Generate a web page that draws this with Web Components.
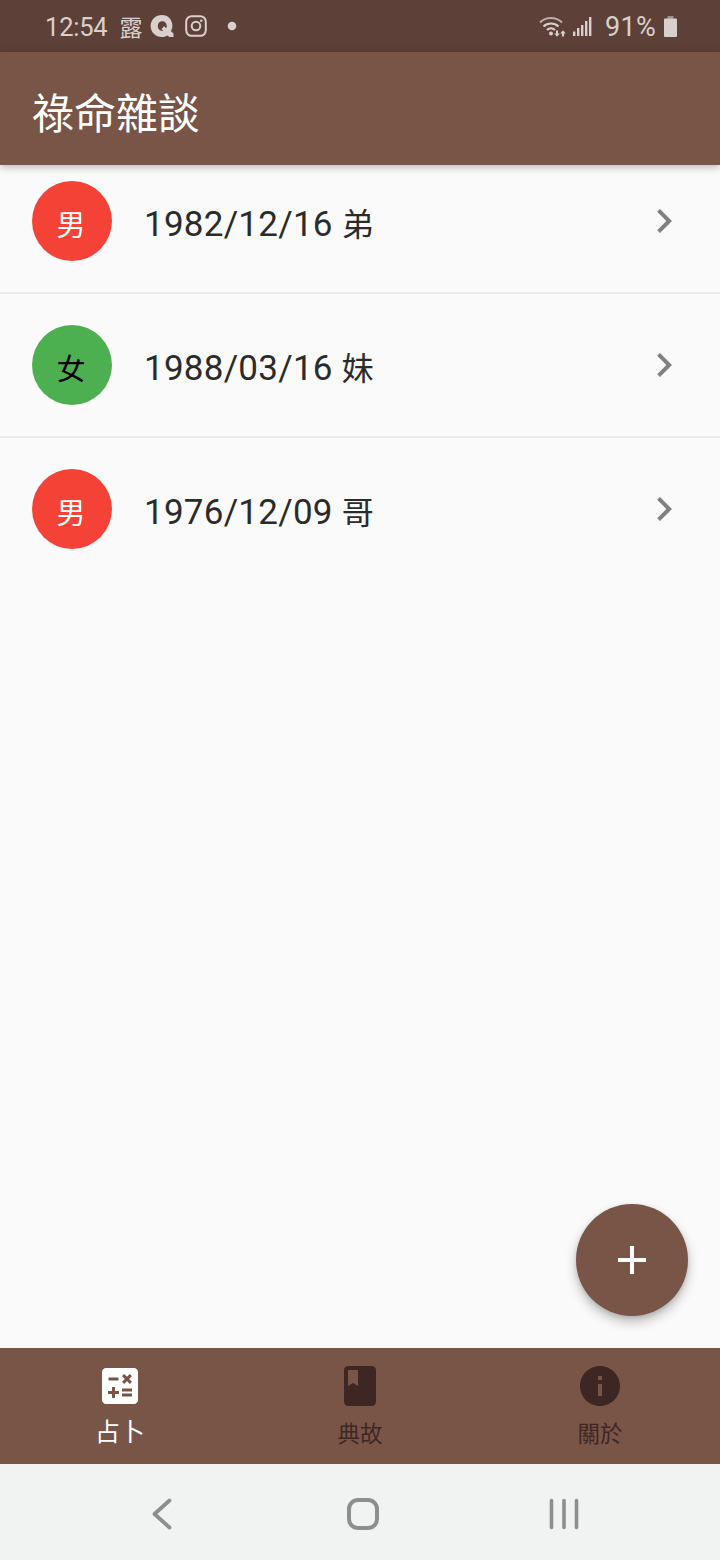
<!DOCTYPE html>
<html lang="zh-Hant">
<head>
<meta charset="utf-8">
<title>祿命雜談</title>
<style>
  html, body { margin: 0; padding: 0; background: #fafafa; }
  body { font-family: Roboto, "Noto Sans CJK TC", sans-serif; }
</style>
</head>
<body>
<app-shell>
  <status-bar slot="top"></status-bar>
  <app-bar slot="top">祿命雜談</app-bar>
  <person-list>
    <person-row sex="男">1982/12/16 <small>弟</small></person-row>
    <person-row sex="女">1988/03/16 <small>妹</small></person-row>
    <person-row sex="男">1976/12/09 <small>哥</small></person-row>
  </person-list>
  <add-fab slot="fab"></add-fab>
  <bottom-nav slot="bottom">
    <nav-item icon="calc" active>占卜</nav-item>
    <nav-item icon="book">典故</nav-item>
    <nav-item icon="info">關於</nav-item>
  </bottom-nav>
  <system-nav slot="bottom"></system-nav>
</app-shell>

<script>
const CJK = '"Noto Sans CJK TC", sans-serif';

class AppShell extends HTMLElement {
  constructor() {
    super();
    this.attachShadow({ mode: 'open' });
    this.shadowRoot.innerHTML = `
      <style>
        :host { display: flex; flex-direction: column; width: 720px; height: 1560px; overflow: hidden; background: #fafafa; }
        .top { position: relative; z-index: 2; }
        .content { position: relative; flex: 1; min-height: 0; }
        .scroll { height: 100%; overflow: hidden; }
        .fab { position: absolute; right: 32px; bottom: 32px; }
      </style>
      <div class="top"><slot name="top"></slot></div>
      <div class="content">
        <div class="scroll"><slot></slot></div>
        <div class="fab"><slot name="fab"></slot></div>
      </div>
      <div><slot name="bottom"></slot></div>
    `;
  }
}

class StatusBar extends HTMLElement {
  constructor() {
    super();
    this.attachShadow({ mode: 'open' });
    this.shadowRoot.innerHTML = `
      <style>
        :host { display: flex; align-items: center; justify-content: space-between; height: 52px; padding: 0 43px 0 45px; background: #5d4037; color: #d9d0cd; }
        .side { display: flex; align-items: center; }
        .time { padding-top: 3px; font: 400 25.500px/1 Roboto, sans-serif; letter-spacing: -0.2px; }
        .han { font: 400 23px/1 ${CJK}; margin-left: 12px; }
        svg { display: block; fill: currentColor; }
        .pct { padding-top: 3px; font: 400 27px/1 Roboto, sans-serif; margin: 0 8px 0 13px; letter-spacing: .3px; }
      </style>
      <div class="side">
        <span class="time">12:54</span>
        <span class="han">露</span>
        <svg style="margin-left:7px" width="24" height="24" viewBox="0 0 24 24"><path fill-rule="evenodd" d="M12 1C5.600 1 .6 5.800 .6 12s5 11 11.400 11c2.500 0 4.300-.7 5.600-1.500l1.600 1.600h4.300v-3.600l-2.600-2.400c.9-1.600 1.500-3.300 1.500-5.100C22.400 5.800 18.300 1 12 1zm.2 6.300c2.700 0 4.500 2 4.500 4.700 0 .8-.2 1.600-.5 2.200l-2.100-2-2.600 2.800 1.800 1.800c-.3.100-.6.100-.9.100-2.700 0-4.600-2.100-4.600-4.900s1.900-4.700 4.400-4.700z"/></svg>
        <svg style="margin-left:11px" width="22" height="22" viewBox="0 0 22 22"><rect x="1.200" y="1.200" width="19.600" height="19.600" rx="5.500" fill="none" stroke="currentColor" stroke-width="2"/><circle cx="11" cy="11" r="4.300" fill="none" stroke="currentColor" stroke-width="2"/><circle cx="16.300" cy="5.700" r="1.300"/></svg>
        <svg style="margin-left:20px" width="10" height="10" viewBox="0 0 10 10"><circle cx="5" cy="5" r="4.300"/></svg>
      </div>
      <div class="side">
        <svg width="28" height="22" viewBox="0 0 28 22"><g fill="none" stroke="currentColor" stroke-width="2.200"><path d="M1 7.500C7 1.500 17 1.500 23 7.500" opacity=".75"/><path d="M4.500 11.500C8.500 7.500 15.500 7.500 19.500 11.500"/><path d="M8 15c2.300-2.200 5.700-2.200 8 0"/></g><circle cx="12" cy="18.500" r="2"/><path d="M17 15.500h2v3h1.800l-2.800 3.200-2.800-3.200H17zM23 21.500h2v-3h1.800L24 15.300l-2.800 3.200H23z"/></svg>
        <svg style="margin-left:6px" width="19" height="19" viewBox="0 0 19 19"><rect x="0" y="14.500" width="2.400" height="4.500"/><rect x="4" y="11" width="2.400" height="8"/><rect x="8" y="8" width="2.400" height="11"/><rect x="12" y="4" width="2.400" height="15"/><rect x="16" y="0" width="2.400" height="19"/></svg>
        <span class="pct">91%</span>
        <svg width="13" height="21" viewBox="0 0 13 21"><rect x="3.500" y="0" width="6" height="3" fill="#9e918c"/><rect x="0" y="2.500" width="13" height="18.500" rx="1"/></svg>
      </div>
    `;
  }
}

class AppBar extends HTMLElement {
  constructor() {
    super();
    this.attachShadow({ mode: 'open' });
    this.shadowRoot.innerHTML = `
      <style>
        :host { display: flex; align-items: center; height: 113px; box-sizing: border-box; padding: 5px 0 0 32px; background: #795548; color: #fff; font: 400 42px/1 ${CJK}; box-shadow: 0 2px 8px rgba(0,0,0,.28); }
      </style>
      <slot></slot>
    `;
  }
}

class PersonList extends HTMLElement {
  constructor() {
    super();
    this.attachShadow({ mode: 'open' });
    // the list is scrolled a little, the top of the first row sits under the app bar
    this.shadowRoot.innerHTML = `
      <style>
        :host { display: block; margin-top: -15px; }
      </style>
      <slot></slot>
    `;
  }
}

class PersonRow extends HTMLElement {
  constructor() {
    super();
    this.attachShadow({ mode: 'open' });
    const sex = this.getAttribute('sex');
    const male = sex === '男';
    this.shadowRoot.innerHTML = `
      <style>
        :host { display: block; }
        .row { display: flex; align-items: center; gap: 32px; height: 142px; padding: 0 32px; border-bottom: 2px solid #e9e9e9; }
        :host(:last-child) .row { border-bottom-color: transparent; }
        .avatar { flex: none; display: flex; align-items: center; justify-content: center; width: 80px; height: 80px; border-radius: 50%; font: 400 29px/1 ${CJK}; padding: 5px 2px 0 0; box-sizing: border-box; }
        .avatar.m { background: #f44336; color: #fff; }
        .avatar.f { background: #4caf50; color: #000; }
        .title { flex: 1; padding-top: 7px; color: #2b2b2b; font: 400 35px/1.2 Roboto, ${CJK}; letter-spacing: .25px; }
        ::slotted(small) { font-size: 32px; font-family: ${CJK}; }
        svg { flex: none; display: block; fill: #808080; }
      </style>
      <div class="row">
        <div class="avatar ${male ? 'm' : 'f'}">${sex}</div>
        <div class="title"><slot></slot></div>
        <svg width="48" height="48" viewBox="0 0 24 24"><path d="M8.590 16.590L13.170 12 8.590 7.410 10 6l6 6-6 6z"/></svg>
      </div>
    `;
  }
}

class AddFab extends HTMLElement {
  constructor() {
    super();
    this.attachShadow({ mode: 'open' });
    this.shadowRoot.innerHTML = `
      <style>
        :host { display: flex; align-items: center; justify-content: center; width: 112px; height: 112px; border-radius: 50%; background: #795548; box-shadow: 0 6px 12px rgba(0,0,0,.24), 0 2px 4px rgba(0,0,0,.12); }
        svg { display: block; fill: #fff; }
      </style>
      <svg width="48" height="48" viewBox="0 0 24 24"><path d="M19 13h-6v6h-2v-6H5v-2h6V5h2v6h6v2z"/></svg>
    `;
  }
}

class BottomNav extends HTMLElement {
  constructor() {
    super();
    this.attachShadow({ mode: 'open' });
    this.shadowRoot.innerHTML = `
      <style>
        :host { display: flex; height: 116px; background: #795548; }
        ::slotted(nav-item) { flex: 1; }
      </style>
      <slot></slot>
    `;
  }
}

const NAV_ICONS = {
  calc: 'M19 3H5C3.900 3 3 3.900 3 5v14c0 1.100.9 2 2 2h14c1.100 0 2-.9 2-2V5c0-1.100-.9-2-2-2zM13.030 7.060L14.090 6l1.410 1.410L16.910 6l1.060 1.060-1.410 1.410 1.410 1.410-1.060 1.060L15.500 9.540l-1.410 1.410-1.060-1.060 1.410-1.410-1.410-1.420zM6.250 7.720h5v1.500h-5v-1.500zM11.500 16h-2v2H8v-2H6v-1.500h2v-2h1.500v2h2V16zm6.500 1.250h-5v-1.500h5v1.500zm0-2.500h-5v-1.500h5v1.500z',
  book: 'M18 2H6c-1.100 0-2 .9-2 2v16c0 1.100.9 2 2 2h12c1.100 0 2-.9 2-2V4c0-1.100-.9-2-2-2zM6 4h5v8l-2.500-1.500L6 12V4z',
  info: 'M12 2C6.480 2 2 6.480 2 12s4.480 10 10 10 10-4.480 10-10S17.520 2 12 2zm1 15h-2v-6h2v6zm0-8h-2V7h2v2z'
};

class NavItem extends HTMLElement {
  constructor() {
    super();
    this.attachShadow({ mode: 'open' });
    const d = NAV_ICONS[this.getAttribute('icon')];
    this.shadowRoot.innerHTML = `
      <style>
        :host { display: flex; flex-direction: column; align-items: center; padding-top: 14px; color: #3e2723; font: 400 22.500px/1 ${CJK}; box-sizing: border-box; }
        :host([active]) { color: #fff; font-size: 25px; }
        svg { display: block; fill: currentColor; }
        .label { margin-top: 11px; }
        :host([active]) .label { margin-top: 8px; }
      </style>
      <svg width="48" height="48" viewBox="0 0 24 24"><path d="${d}"/></svg>
      <span class="label"><slot></slot></span>
    `;
  }
}

class SystemNav extends HTMLElement {
  constructor() {
    super();
    this.attachShadow({ mode: 'open' });
    this.shadowRoot.innerHTML = `
      <style>
        :host { display: grid; grid-template-columns: repeat(3, 201px); height: 96px; box-sizing: border-box; padding: 4px 0 0 61px; align-items: center; justify-items: center; background: #f1f2f2; }
        svg { display: block; fill: none; stroke: #8e8e8e; stroke-linecap: round; stroke-linejoin: round; }
      </style>
      <svg width="40" height="40" viewBox="0 0 40 40" stroke-width="3.800"><path d="M27.500 6.500L12.500 20 27.500 33.500"/></svg>
      <svg width="40" height="40" viewBox="0 0 40 40" stroke-width="4"><rect x="6" y="6" width="28" height="28" rx="9"/></svg>
      <svg width="40" height="40" viewBox="0 0 40 40" stroke-width="3.600"><path d="M7.500 6.500v27M20 6.500v27M32.500 6.500v27"/></svg>
    `;
  }
}

customElements.define('app-shell', AppShell);
customElements.define('status-bar', StatusBar);
customElements.define('app-bar', AppBar);
customElements.define('person-list', PersonList);
customElements.define('person-row', PersonRow);
customElements.define('add-fab', AddFab);
customElements.define('bottom-nav', BottomNav);
customElements.define('nav-item', NavItem);
customElements.define('system-nav', SystemNav);
</script>
</body>
</html>
